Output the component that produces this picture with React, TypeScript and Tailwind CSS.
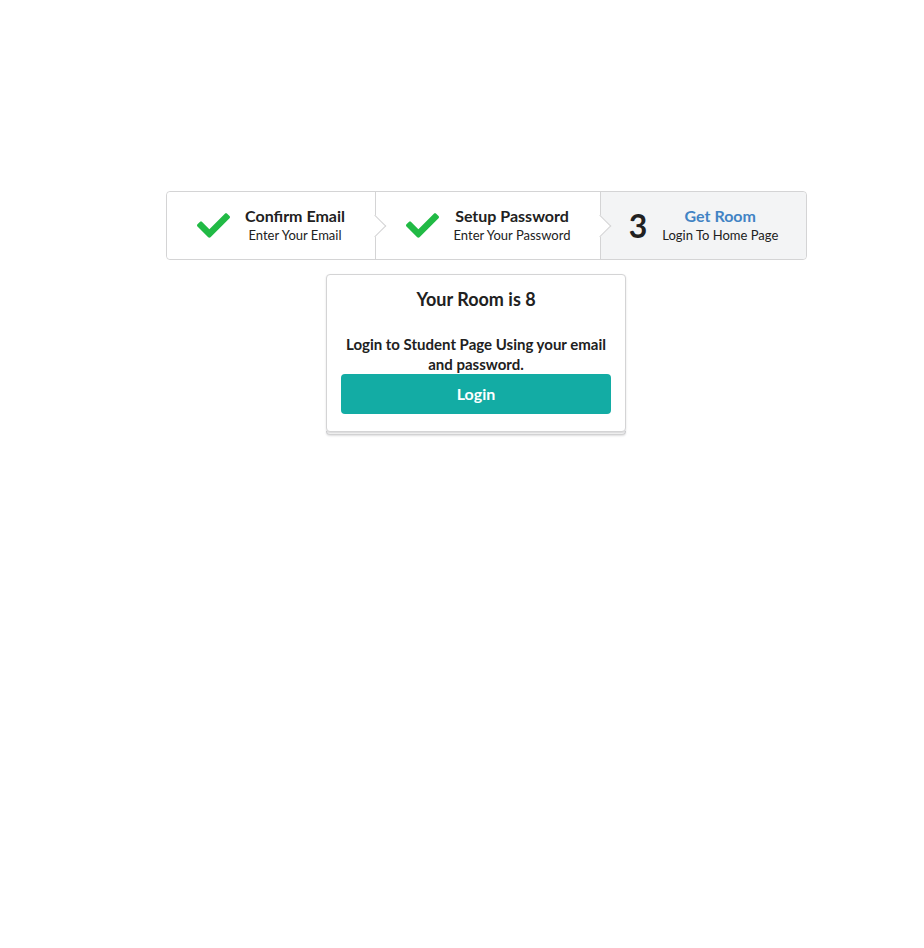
import { FaCheck } from "react-icons/fa"

const steps = [
  { title: "Confirm Email", desc: "Enter Your Email", done: true, w: "w-[209px]" },
  { title: "Setup Password", desc: "Enter Your Password", done: true, w: "w-[225px]" },
  { title: "Get Room", desc: "Login To Home Page", done: false, w: "flex-1" },
]

export default function App() {
  return (
    <div
      className="min-h-[948px] w-full bg-white text-[14px] text-[#212121] pt-[191px]"
      style={{ fontFamily: "Lato, 'Open Sans', sans-serif" }}
    >
      <div className="ml-[166px] w-[641px] flex border border-[#d4d4d5] rounded">
        {steps.map((s, i) => {
          const last = i === steps.length - 1
          return (
            <div
              key={s.title}
              className={`relative ${s.w} flex items-center justify-center py-4 ${
                last ? "bg-[#f3f4f5] rounded-r" : "bg-white border-r border-[#d4d4d5]"
              } ${i === 0 ? "rounded-l" : ""}`}
            >
              {s.done ? (
                <FaCheck className="text-[#21ba45] w-[33px] h-[33px] mr-[15px]" />
              ) : (
                <span className="text-[32px] font-bold leading-none mr-[15px]">3</span>
              )}
              <div className="text-center">
                <div
                  className={`text-[16px] font-bold leading-4 ${last ? "text-[#4183c4]" : ""}`}
                >
                  {s.title}
                </div>
                <div className="text-[13px] leading-4 mt-[3px]">{s.desc}</div>
              </div>
              {!last && (
                <div className="absolute top-1/2 right-0 w-4 h-4 translate-x-1/2 -translate-y-1/2 -rotate-45 bg-white border-r border-b border-[#d4d4d5] z-10" />
              )}
            </div>
          )
        })}
      </div>

      <div className="ml-[326px] mt-[14px] w-[300px]">
        <div className="relative border border-[#d4d4d5] rounded bg-white px-[14px] pt-[13px] pb-[17px] text-center shadow-[0_1px_2px_rgba(34,36,38,0.15)]">
          <h3 className="text-[18px] font-bold leading-[23px]">Your Room is 8</h3>
          <p className="mt-6 text-[15px] font-bold leading-[19.5px]">
            Login to Student Page Using your email and password.
          </p>
          <button className="w-full h-10 rounded bg-[#13aca4] text-white text-[16px] font-bold">
            Login
          </button>
        </div>
        <div className="h-[4px] -mt-[1px] border border-t-0 border-[#d4d4d5] rounded-b bg-[#f7f7f7] shadow-[0_1px_2px_rgba(34,36,38,0.15)]" />
      </div>
    </div>
  )
}
